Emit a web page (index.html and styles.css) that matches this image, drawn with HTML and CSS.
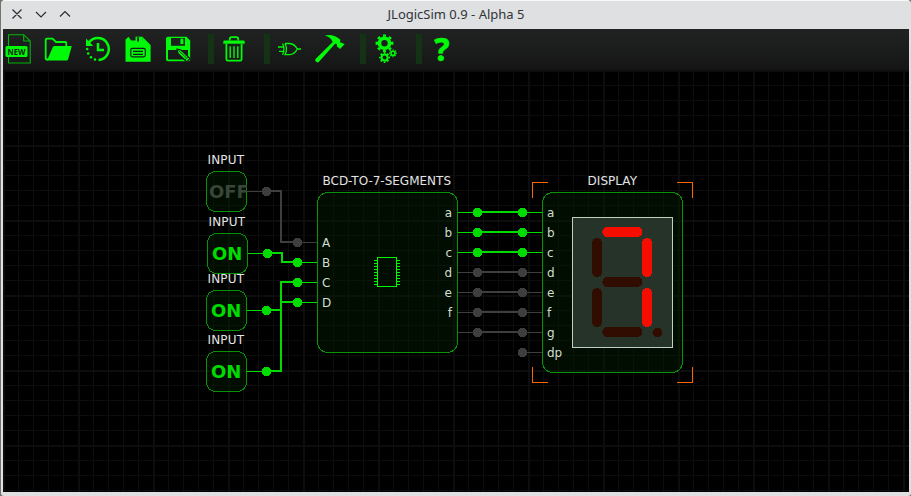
FILE: index.html
```html
<!DOCTYPE html>
<html lang="en">
<head>
<meta charset="utf-8">
<title>JLogicSim 0.9 - Alpha 5</title>
<link rel="stylesheet" href="styles.css">
</head>
<body>
<div class="window">
  <header class="titlebar">
    <svg class="controls" viewBox="0 0 70 28"><path d="M9.5 8.5l9 9M18.5 8.5l-9 9M33 11l5 5 5-5M57 15.5l5-5 5 5"/></svg>
    <span class="title">JLogicSim 0.9 - Alpha 5</span>
  </header>
  <nav class="toolbar">
    <svg class="icon" viewBox="0 0 30 30"><path class="thin" d="M5.5 12V.7H20.7L27.2 7V29H5.5V23M20.7 .7V7H27"/><rect x="2.5" y="12" width="22" height="11" rx="1.5"/><text class="new" x="13.5" y="20.7" textLength="18" lengthAdjust="spacingAndGlyphs">NEW</text></svg>
    <svg class="icon" viewBox="0 0 30 30"><path class="line" d="M5 25.5H3.5Q2.7 25.5 2.7 24.5V6Q2.7 4.7 4 4.7H9.5L13 8H22Q23.3 8 23.3 9.3V12"/><path d="M11.5 12H28.8L25.2 25Q24.8 26.5 23.4 26.5H4L9.7 13.2Q10.2 12 11.5 12Z"/></svg>
    <svg class="icon" viewBox="0 0 30 30"><path class="history" d="M6 8.4A11 11 0 1 1 15.5 26M15 9V16H21"/><path d="M3 4.5V12H10.3Z"/><circle cx="4.2" cy="15" r="1.3"/><circle cx="5.2" cy="19.5" r="1.3"/><circle cx="8" cy="23.3" r="1.3"/><circle cx="12" cy="25.5" r="1.3"/></svg>
    <svg class="icon" viewBox="0 0 30 30"><path d="M2.5 5.5L5.5 2.7 8.2 6.5H19.3V2.7L27.6 11V27.7H2.5Z"/><rect x="12.5" y="2.7" width="7" height="6"/><rect class="cut" x="14.2" y="3.2" width="1.8" height="4.4"/><rect class="frame" x="7.8" y="14.3" width="14.5" height="8.5" rx="1.5"/><path class="frame" d="M10 17.3H20M10 20.3H20"/></svg>
    <svg class="icon" viewBox="0 0 30 30"><path fill-rule="evenodd" d="M5 2.7H23.5L27.2 6.4V25.5Q27.2 27.2 25.5 27.2H5Q3 27.2 3 25.2V4.7Q3 2.7 5 2.7ZM8 4V11.7H22V4ZM5 16V25.5H25V16Z"/><rect x="17.4" y="4.6" width="3" height="5.5"/><path class="pencil" d="M14 15.2L18 16 27 24.5 23.8 28 15 19.5Z"/><path class="pencil-line" d="M15.5 16.5L23.5 24M22 26L25 22.6"/></svg>
    <i class="separator"></i>
    <svg class="icon" viewBox="0 0 30 30"><path d="M4.3 9.8V7.8Q4.3 6.5 5.6 6.5H24.3Q25.7 6.5 25.7 7.8V9.8Z"/><path class="line" d="M10.8 6.5V5Q10.8 3.2 12.6 3.2H17.4Q19.2 3.2 19.2 5V6.5M7.4 10V25.2Q7.4 26.7 8.9 26.7H21.1Q22.6 26.7 22.6 25.2V10"/><path class="line small" d="M11.2 12.3V24M15 12.3V24M18.8 12.3V24"/></svg>
    <i class="separator"></i>
    <svg class="icon" viewBox="0 0 30 30"><path class="gate" d="M3 13H9M4 17.3H9M7.5 9.5Q10.5 15 7.5 20.7M10 9.5H14.5Q19.5 9.8 22.3 15 19.5 20.4 14.5 20.7H10Q13 15 10 9.5M22 15H26"/></svg>
    <svg class="icon" viewBox="0 0 30 30"><path d="M9.7 1.4Q19 -.4 25.4 5.8L24.9 8.2 26.7 8.8 29.6 10.3 25 15 21.8 12.3 22 10.1 20.1 9.8 4.2 27.5Q2.6 29.3 .8 27.6-.8 26 1 24.4L17.7 8.1Q15.7 2.8 9.7 1.4Z"/></svg>
    <i class="separator"></i>
    <svg class="icon" viewBox="0 0 30 30"><circle class="gear big" cx="13.5" cy="9.3" r="5"/><circle class="teeth big-teeth" pathLength="80" cx="13.5" cy="9.3" r="7.7"/><circle class="gear mid" cx="13.6" cy="23.6" r="3"/><circle class="teeth mid-teeth" pathLength="80" cx="13.6" cy="23.6" r="4.6"/><circle class="gear low" cx="22" cy="19.3" r="2"/><circle class="teeth low-teeth" pathLength="80" cx="22" cy="19.3" r="3.2"/></svg>
    <i class="separator"></i>
    <svg class="icon" viewBox="0 0 30 30"><text class="help" x="15" y="26.5">?</text></svg>
  </nav>
  <main class="canvas">
    <svg class="schematic" viewBox="3 70 906 422">
      <defs>
        <pattern id="minor" x="3" y="70" width="15" height="15" patternUnits="userSpaceOnUse"><path class="grid" d="M0 .5H15M.5 0V15"/></pattern>
        <pattern id="major" x="3" y="70" width="75" height="75" patternUnits="userSpaceOnUse"><path class="grid" d="M0 1.5H75M1.5 0V75"/></pattern>
        <clipPath id="key"><rect x="206" y="171" width="41" height="41"/></clipPath>
      </defs>
      <rect x="3" y="70" width="906" height="422" fill="url(#minor)"/>
      <rect x="3" y="70" width="906" height="422" fill="url(#major)"/>

      <g class="box">
        <rect x="206.5" y="171.5" width="40" height="40" rx="9"/>
        <rect x="207.5" y="233.5" width="40" height="40" rx="9"/>
        <rect x="206.5" y="290.5" width="40" height="40" rx="9"/>
        <rect x="206.5" y="351.5" width="40" height="40" rx="9"/>
        <rect x="317.5" y="192.5" width="140" height="160" rx="10"/>
        <rect x="542.5" y="192.5" width="140" height="180" rx="10"/>
      </g>

      <g class="off">
        <path class="lead" d="M247 191.5H266M297 242.5H317M458 272.5H477M458 292.5H477M458 312.5H477M458 332.5H477M522 272.5H542M522 292.5H542M522 312.5H542M522 332.5H542M522 352.5H542"/>
        <path class="wire" d="M266 191H281V242H297M477 272H522M477 292H522M477 312H522M477 332H522"/>
        <path class="dot" d="M266.5 191.5h0M297.5 242.5h0M477.5 272.5h0M477.5 292.5h0M477.5 312.5h0M477.5 332.5h0M522.5 272.5h0M522.5 292.5h0M522.5 312.5h0M522.5 332.5h0M522.5 352.5h0"/>
      </g>
      <g class="on">
        <path class="lead" d="M248 253.5H267M247 310.5H266M247 371.5H266M297 262.5H317M297 282.5H317M297 302.5H317M458 212.5H477M458 232.5H477M458 252.5H477M522 212.5H542M522 232.5H542M522 252.5H542"/>
        <path class="wire" d="M267 253H282V262H297M266 310H281V282H297M266 371H281V302H297M477 212H522M477 232H522M477 252H522"/>
        <path class="dot" d="M267.5 253.5h0M266.5 310.5h0M266.5 371.5h0M297.5 262.5h0M297.5 282.5h0M297.5 302.5h0M477.5 212.5h0M477.5 232.5h0M477.5 252.5h0M522.5 212.5h0M522.5 232.5h0M522.5 252.5h0"/>
      </g>

      <g class="label">
        <text x="207.5" y="164" textLength="36.5">INPUT</text>
        <text x="208.5" y="226" textLength="36.5">INPUT</text>
        <text x="207.5" y="283" textLength="36.5">INPUT</text>
        <text x="207.5" y="344" textLength="36.5">INPUT</text>
        <text x="322.5" y="185" textLength="128.5">BCD-TO-7-SEGMENTS</text>
        <text x="587.5" y="185" textLength="49.5">DISPLAY</text>
      </g>
      <g class="key">
        <text class="key-off" x="209" y="198" clip-path="url(#key)">OFF</text>
        <text x="212" y="260">ON</text>
        <text x="211" y="317">ON</text>
        <text x="211" y="378">ON</text>
      </g>
      <g class="pin">
        <text x="322" y="247">A</text><text x="322" y="267">B</text><text x="322" y="287">C</text><text x="322" y="307">D</text>
        <g class="end"><text x="452" y="217">a</text><text x="452" y="237">b</text><text x="452" y="257">c</text><text x="452" y="277">d</text><text x="452" y="297">e</text><text x="452" y="317">f</text></g>
        <text x="547" y="217">a</text><text x="547" y="237">b</text><text x="547" y="257">c</text><text x="547" y="277">d</text><text x="547" y="297">e</text><text x="547" y="317">f</text><text x="547" y="337">g</text><text x="547" y="357">dp</text>
      </g>
      <path class="chip" d="M377.5 257.5H396.5V286.5H377.5ZM374 260.5h3M374 263.5h3M374 266.5h3M374 269.5h3M374 272.5h3M374 275.5h3M374 278.5h3M374 281.5h3M374 284.5h3M397 260.5h3M397 263.5h3M397 266.5h3M397 269.5h3M397 272.5h3M397 275.5h3M397 278.5h3M397 281.5h3M397 284.5h3"/>

      <rect class="panel" x="572.5" y="217.5" width="100" height="130"/>
      <g class="dark">
        <rect x="592" y="238" width="10" height="39" rx="5"/>
        <rect x="592" y="288" width="10" height="39" rx="5"/>
        <rect x="602.4" y="277" width="40" height="10" rx="5"/>
        <rect x="602.4" y="327" width="40" height="10" rx="5"/>
        <circle cx="657.3" cy="332.5" r="4.8"/>
      </g>
      <g class="lit">
        <rect x="602.4" y="227" width="40" height="10" rx="5"/>
        <rect x="642" y="238" width="10" height="39" rx="5"/>
        <rect x="642" y="288" width="10" height="39" rx="5"/>
      </g>
      <path class="selection" d="M532.5 198V182.5H548M677 182.5H692.5V198M532.5 367V382.5H548M677 382.5H692.5V367"/>
    </svg>
  </main>
</div>
</body>
</html>
```
FILE: styles.css
```css
* { box-sizing: border-box; }
body { margin: 0; width: 911px; height: 496px; overflow: hidden; background: #77736b; }
.window {
  display: flex; flex-direction: column;
  width: 910px; height: 496px; margin-left: 1px;
  padding: 0 2px 4px; border-top: 1px solid #f7f8f8; border-radius: 4px 4px 3px 3px;
  background: #dee0e2;
}
.titlebar { display: grid; grid-template-columns: 70px 1fr 70px; height: 28px; align-items: center; }
.controls { width: 70px; height: 28px; fill: none; stroke: #292d31; stroke-width: 1.15; }
.title { font: 13px/26px "Noto Sans", sans-serif; height: 28px; color: #303438; text-align: center; }
.toolbar {
  display: flex; gap: 10px; height: 41px; padding-top: 5px;
  background: linear-gradient(#212323, #151515);
}
.icon { width: 30px; height: 30px; flex: none; fill: #00fa08; overflow: visible; }
.separator { width: 6px; height: 30px; margin: 0 -5px 0 5px; background: #143315; }
.line { fill: none; stroke: #00fa08; stroke-width: 1.8; }
.thin { fill: none; stroke: #00b807; stroke-width: 1.1; }
.small { stroke-width: 1.4; }
.new { font: bold 8px "Open Sans", sans-serif; fill: #0b240d; text-anchor: middle; }
.history { fill: none; stroke: #00fa08; stroke-width: 2.5; }
.cut { fill: #1a1b1b; }
.frame { fill: none; stroke: #1a1b1b; stroke-width: 1.2; }
.pencil { stroke: #1b1c1c; stroke-width: 1.2; }
.pencil-line { fill: none; stroke: #1b1c1c; stroke-width: .8; }
.gate { fill: none; stroke: #00fa08; stroke-width: 1.3; }
.gear, .teeth { fill: none; stroke: #00fa08; }
.big { stroke-width: 3.6; }
.mid { stroke-width: 2; }
.low { stroke-width: 1.6; }
.teeth { stroke-dasharray: 5 5; stroke-dashoffset: 2.5; }
.big-teeth { stroke-width: 2.4; }
.mid-teeth { stroke-width: 1.7; }
.low-teeth { stroke-width: 1.4; }
.help { font: bold 32px "Noto Sans", sans-serif; text-anchor: middle; stroke: #00fa08; stroke-width: .6; stroke-linejoin: round; }
.canvas { flex: 1; min-height: 0; background: #000; }
.schematic { display: block; width: 906px; height: 422px; shape-rendering: crispEdges; }
.grid { fill: none; stroke: #0d0d0d; }
.box { fill: rgba(0, 32, 0, .42); stroke: #079207; }
.lead, .wire, .dot { fill: none; }
.wire { stroke-width: 2; }
.dot { stroke-width: 9.6; stroke-linecap: round; }
.off { stroke: #3e3e3e; }
.on { stroke: #00dc00; }
.label, .pin { font: 12px "DejaVu Sans", sans-serif; fill: #e4e4e4; }
.pin { fill: #d1ded1; }
.end { text-anchor: end; }
.key { font: bold 18px "DejaVu Sans", sans-serif; fill: #00dc00; }
.key-off { fill: #38463a; }
.chip { fill: none; stroke: #00f500; }
.panel { fill: #263329; stroke: #bed0be; }
.dark { fill: #300d00; }
.lit { fill: #f50d00; }
.selection { fill: none; stroke: #fa6500; }
```
